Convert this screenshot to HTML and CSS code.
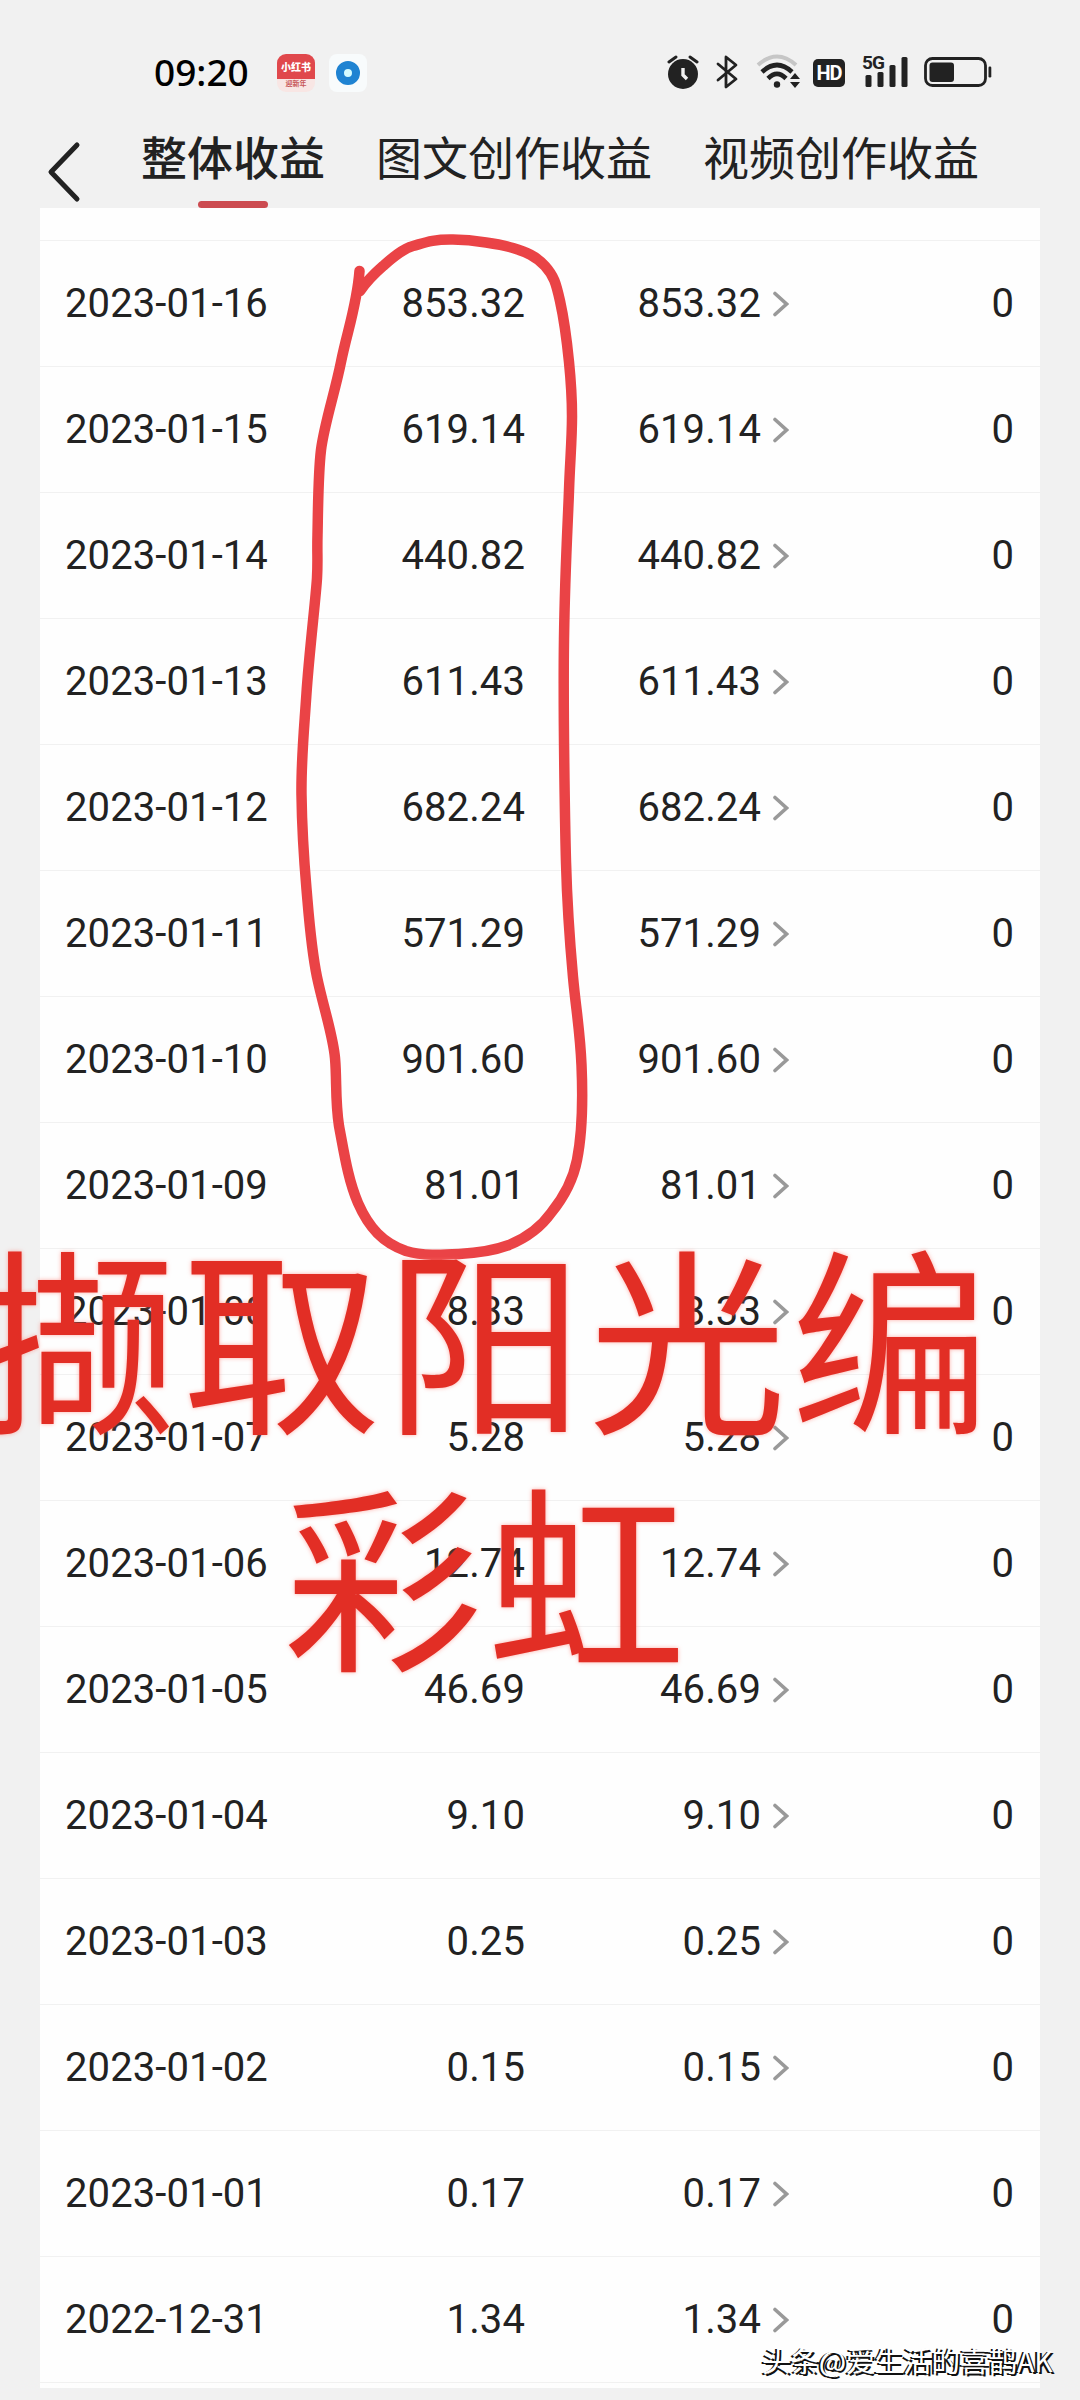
FILE: index.html
```html
<!DOCTYPE html>
<html lang="zh-CN">

<head>
    <meta charset="UTF-8">
    <meta name="viewport" content="width=device-width, initial-scale=1.0">
    <title>整体收益</title>
    <link rel="stylesheet" href="styles.css">
</head>

<body>
    <div class="status-bar">
        <span class="time">09:20</span>
        <div class="app app-red">
            <b>小红书</b>
            <i>迎新年</i>
        </div>
        <div class="app app-blue"><span></span></div>
        <div class="status-icons">
            <svg width="32" height="36" viewBox="0 0 32 36">
                <circle cx="16" cy="20" r="15" fill="#222" />
                <path d="M2 8L9 3M30 8L23 3" stroke="#222" stroke-width="3" stroke-linecap="round" />
                <path d="M16 14v7l4 4" fill="none" stroke="#f1f1f1" stroke-width="3.4" />
            </svg>
            <svg class="bluetooth" width="22" height="36" viewBox="0 0 22 36">
                <path d="M2 10L20 25L10 33V3L20 11L2 26" fill="none" stroke="#222" stroke-width="2.8" stroke-linejoin="round" stroke-linecap="round" />
            </svg>
            <svg class="wifi" width="46" height="36" viewBox="0 0 46 36">
                <path d="M2 11Q21 -6 40 11" fill="none" stroke="#c6c6c6" stroke-width="4" />
                <path d="M6 18Q21 4 36 18" fill="none" stroke="#222" stroke-width="4.6" />
                <path d="M12 24.500Q21 15.500 30 24.500" fill="none" stroke="#222" stroke-width="4.6" />
                <circle cx="21" cy="30.500" r="3.200" fill="#222" />
                <path d="M34 25l5-6l5 6zM34 28h10l-5 6z" fill="#222" />
            </svg>
            <span class="hd">HD</span>
            <div class="signal">
                <small>5G</small>
                <svg width="46" height="36" viewBox="0 0 46 36">
                    <rect x="3.500" y="21" width="6" height="12" rx="1.500" fill="#222" />
                    <rect x="15.500" y="18" width="6" height="15" rx="1.500" fill="#222" />
                    <rect x="27.500" y="11" width="6" height="22" rx="1.500" fill="#222" />
                    <rect x="39.500" y="3" width="6" height="30" rx="1.500" fill="#222" />
                </svg>
            </div>
            <svg width="68" height="36" viewBox="0 0 68 36">
                <rect x="1.500" y="4.500" width="60" height="27" rx="7" fill="none" stroke="#222" stroke-width="2.800" />
                <rect x="5.500" y="8.500" width="24.500" height="19.500" rx="3" fill="#222" />
                <rect x="64.500" y="12.500" width="2.800" height="11" rx="1.200" fill="#222" />
            </svg>
        </div>
    </div>

    <nav class="tabs">
        <svg class="back" width="36" height="64" viewBox="0 0 36 64">
            <path d="M31 5L5 32L31 59" fill="none" stroke="#222" stroke-width="5" stroke-linecap="round" stroke-linejoin="round" />
        </svg>
        <a class="tab active">整体收益</a>
        <a class="tab">图文创作收益</a>
        <a class="tab">视频创作收益</a>
    </nav>

    <main class="card">
        <table id="income-table">
            <colgroup>
                <col class="col-date">
                <col class="col-total">
                <col class="col-article">
                <col class="col-video">
            </colgroup>
            <tbody></tbody>
        </table>
    </main>

    <svg class="marker" width="1080" height="2400" viewBox="0 0 1080 2400">
        <path d="M359.500 271C357 305 347 332 341 362S324 425 321 450S318 515 317.500 535S318 560 317 578S309 655 306.500 693S301 760 301.500 795S304 860 306.500 889S311 948 317 977S333 1035 335 1058S335 1100 339 1126C344 1152 348 1180 358 1203C369 1228 383 1243 406 1251C423 1256 441 1255 459 1254C478 1253 493 1251 509 1245C526 1238 541 1227 551 1213C564 1197 573 1181 577 1160C582 1135 583 1100 581.500 1065S576 1010 573 977S567 900 566 862S563 710 564 639S568 520 569 490.500S572 440 572 416S571 382 569 362S564 319 560 301S554 276 545 266S526 252 513 248S474 240 453 239.600S424 243 413 246S391 259 383 266S366 282 360 291" />
    </svg>

    <div class="caption">撷取阳光编<br>彩虹</div>
    <div class="watermark">头条@爱生活的喜鹊AK</div>

    <script>
        const income = [
            ["2023-01-16", "853.32"],
            ["2023-01-15", "619.14"],
            ["2023-01-14", "440.82"],
            ["2023-01-13", "611.43"],
            ["2023-01-12", "682.24"],
            ["2023-01-11", "571.29"],
            ["2023-01-10", "901.60"],
            ["2023-01-09", "81.01"],
            ["2023-01-08", "8.33"],
            ["2023-01-07", "5.28"],
            ["2023-01-06", "12.74"],
            ["2023-01-05", "46.69"],
            ["2023-01-04", "9.10"],
            ["2023-01-03", "0.25"],
            ["2023-01-02", "0.15"],
            ["2023-01-01", "0.17"],
            ["2022-12-31", "1.34"]
        ];

        const arrow = '<svg class="arrow" width="16" height="26" viewBox="0 0 16 26"><path d="M2 2.500L13.500 13L2 23.500"/></svg>';
        const table = document.getElementById("income-table").getElementsByTagName("tbody")[0];

        income.forEach(([date, amount]) => {
            const row = table.insertRow();
            row.insertCell(0).textContent = date;
            row.insertCell(1).textContent = amount;
            row.insertCell(2).innerHTML = '<div class="detail">' + amount + arrow + '</div>';
            row.insertCell(3).textContent = "0";
        });
    </script>
</body>

</html>
```
FILE: styles.css
```css
* {
    box-sizing: border-box;
}

body {
    position: relative;
    width: 1080px;
    height: 2400px;
    margin: 0;
    overflow: hidden;
    background-color: #f1f1f1;
    color: #222;
    font-family: Roboto, "Noto Sans CJK SC", sans-serif;
}

svg {
    display: block;
    flex: none;
}

.status-bar {
    display: flex;
    align-items: flex-start;
    height: 120px;
    padding: 54px 88px 0 154px;
}

.time {
    width: 123px;
    font-family: "Noto Sans", sans-serif;
    font-size: 37px;
    font-weight: 500;
    line-height: 36px;
    color: #000;
}

.app {
    width: 38px;
    height: 38px;
    overflow: hidden;
    text-align: center;
}

.app-red {
    background-color: #f8e6e4;
    border-radius: 9px;
}

.app-red b {
    display: block;
    height: 25px;
    background-color: #e0484c;
    color: #fff;
    font-size: 10px;
    font-weight: 900;
    line-height: 28px;
}

.app-red i {
    display: block;
    color: #c8585a;
    font-size: 7px;
    font-style: normal;
    font-weight: bold;
    line-height: 11px;
}

.app-blue {
    display: flex;
    align-items: center;
    justify-content: center;
    margin-left: 14px;
    background-color: #f8fbfc;
    border-radius: 8px;
}

.app-blue span {
    width: 24px;
    height: 24px;
    border: 8px solid #1f83d2;
    border-radius: 50%;
    background-color: #d5fbff;
}

.status-icons {
    display: flex;
    margin-left: auto;
}

.bluetooth {
    margin-left: 17px;
}

.wifi {
    margin-left: 18px;
}

.hd {
    width: 32px;
    height: 28px;
    margin: 5px 17px 0 11px;
    border-radius: 5px;
    background-color: #222;
    color: #fff;
    font-size: 20px;
    font-weight: bold;
    line-height: 29px;
    text-align: center;
    letter-spacing: -1px;
}

.signal {
    position: relative;
    margin-right: 16px;
}

.signal small {
    position: absolute;
    top: -1px;
    left: 0;
    font-size: 19px;
    font-weight: bold;
    line-height: 19px;
    letter-spacing: -1px;
}

.tabs {
    display: flex;
    align-items: flex-start;
    height: 88px;
    padding-left: 46px;
}

.back {
    margin-top: 20px;
    margin-right: 59px;
}

.tab {
    position: relative;
    height: 88px;
    margin-right: 51px;
    font-size: 46px;
    line-height: 79px;
    white-space: nowrap;
}

.tab.active {
    font-weight: 500;
}

.tab.active::after {
    content: "";
    position: absolute;
    left: 57px;
    bottom: 0;
    width: 70px;
    height: 7px;
    border-radius: 4px;
    background-color: #cc4b50;
}

.card {
    width: 1000px;
    height: 2180px;
    margin-left: 40px;
    padding-top: 32px;
    background-color: #fefefe;
}

table {
    width: 100%;
    table-layout: fixed;
    border-spacing: 0;
    border-top: 1px solid #f1f1f1;
    font-size: 40px;
    letter-spacing: 0.1px;
}

.col-date {
    width: 235px;
}

.col-total {
    width: 250px;
}

.col-article {
    width: 264px;
}

td {
    height: 126px;
    padding: 0;
    border-bottom: 1px solid #f1f1f1;
    text-align: right;
    white-space: nowrap;
}

td:first-child {
    padding-left: 25px;
    text-align: left;
}

td:last-child {
    padding-right: 26px;
}

.detail {
    display: flex;
    align-items: center;
    justify-content: flex-end;
}

.arrow {
    margin-left: 12px;
}

.arrow path {
    fill: none;
    stroke: #999;
    stroke-width: 3.6;
    stroke-linecap: round;
}

/* hand drawn loop over the second column */
.marker {
    position: absolute;
    top: 0;
    left: 0;
}

.marker path {
    fill: none;
    stroke: #ea4346;
    stroke-width: 10.5;
    stroke-linecap: round;
    stroke-linejoin: round;
}

.caption {
    position: absolute;
    top: 1214px;
    left: -21px;
    width: 1015px;
    color: #e22e25;
    font-family: "Noto Sans CJK SC", sans-serif;
    font-size: 199px;
    line-height: 237px;
    letter-spacing: 4px;
    text-align: center;
    white-space: nowrap;
    text-shadow: 0 0 4px rgba(255, 120, 110, 0.6);
}

.watermark {
    position: absolute;
    top: 2339px;
    left: 762px;
    color: #fff;
    font-family: "Noto Sans CJK SC", sans-serif;
    font-size: 28.5px;
    line-height: 42px;
    white-space: nowrap;
    text-shadow: -2px 1px 0 #111, 2px 2px 0 #111;
}
```
